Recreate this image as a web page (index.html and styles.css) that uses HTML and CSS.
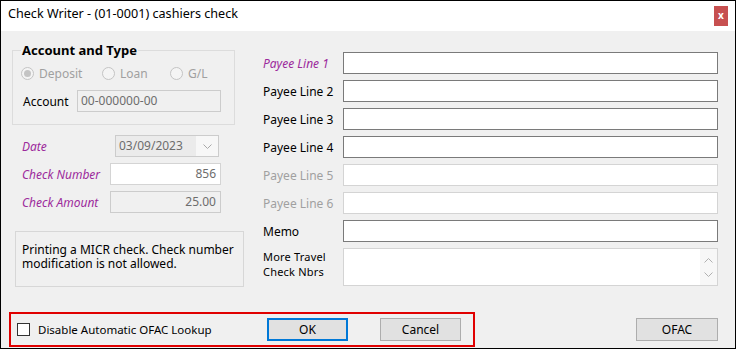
FILE: index.html
```html
<!DOCTYPE html>
<html lang="en">
<head>
    <meta charset="UTF-8">
    <meta name="viewport" content="width=device-width, initial-scale=1.0">
    <title>Check Writer</title>
    <link rel="stylesheet" href="styles.css">
</head>
<body>
    <div class="window">
        <div class="titlebar">
            <span class="title">Check Writer - (01-0001) cashiers check</span>
            <span class="close">x</span>
        </div>

        <div class="content">
            <div class="main">
                <div class="left">
                    <fieldset class="group">
                        <legend>Account and Type</legend>
                        <div class="radios">
                            <span class="radio radio-deposit"><span class="dot checked"></span>Deposit</span>
                            <span class="radio radio-loan"><span class="dot"></span>Loan</span>
                            <span class="radio"><span class="dot"></span>G/L</span>
                        </div>
                        <div class="account-row">
                            <span class="account-label">Account</span>
                            <div class="box box-disabled account-box">00-000000-00</div>
                        </div>
                    </fieldset>

                    <div class="fields">
                        <span class="label required">Date</span>
                        <div class="combo">
                            <span class="combo-text">03/09/2023</span>
                            <span class="combo-btn">
                                <svg width="9" height="5" viewBox="0 0 9 5"><path d="M0.5 0.5 L4.5 4.5 L8.5 0.5" fill="none" stroke="#a8a8a8" stroke-width="1"/></svg>
                            </span>
                        </div>

                        <span class="label required">Check Number</span>
                        <div class="box box-light num">856</div>

                        <span class="label required">Check Amount</span>
                        <div class="box box-disabled num">25.00</div>
                    </div>

                    <div class="notice">
                        Printing a MICR check. Check number modification is not allowed.
                    </div>
                </div>

                <div class="right">
                    <span class="label required">Payee Line 1</span>
                    <div class="box"></div>

                    <span class="label">Payee Line 2</span>
                    <div class="box"></div>

                    <span class="label">Payee Line 3</span>
                    <div class="box"></div>

                    <span class="label">Payee Line 4</span>
                    <div class="box"></div>

                    <span class="label muted">Payee Line 5</span>
                    <div class="box box-light"></div>

                    <span class="label muted">Payee Line 6</span>
                    <div class="box box-light"></div>

                    <span class="label">Memo</span>
                    <div class="box"></div>

                    <span class="label label-top">More Travel<br>Check Nbrs</span>
                    <div class="box box-light textarea">
                        <div class="scroll">
                            <svg width="9" height="5" viewBox="0 0 9 5"><path d="M0.5 4.5 L4.5 0.5 L8.5 4.5" fill="none" stroke="#b0b0b0" stroke-width="1"/></svg>
                            <svg width="9" height="5" viewBox="0 0 9 5"><path d="M0.5 0.5 L4.5 4.5 L8.5 0.5" fill="none" stroke="#b0b0b0" stroke-width="1"/></svg>
                        </div>
                    </div>
                </div>
            </div>

            <div class="footer">
                <div class="highlight">
                    <label class="check"><span class="checkbox"></span>Disable Automatic OFAC Lookup</label>
                    <button class="btn btn-default">OK</button>
                    <button class="btn">Cancel</button>
                </div>
                <button class="btn btn-ofac">OFAC</button>
            </div>
        </div>
    </div>
</body>
</html>
```

FILE: styles.css
```css
* {
    box-sizing: border-box;
    margin: 0;
    padding: 0;
}

body {
    font-family: "Noto Sans", "Open Sans", sans-serif;
    font-size: 12px;
    color: #000;
    background: #fff;
}

.window {
    width: 736px;
    height: 349px;
    border: 1px solid #000;
    display: flex;
    flex-direction: column;
}

.titlebar {
    height: 30px;
    background: #fff;
    display: flex;
    align-items: flex-start;
    justify-content: space-between;
    padding-left: 7px;
}

.title {
    margin-top: 5px;
    font-size: 12.6px;
    line-height: 16px;
}

.close {
    width: 14px;
    height: 20px;
    margin-top: 5px;
    margin-right: 7px;
    background: #c75050;
    color: #fff;
    font-size: 10px;
    font-weight: bold;
    line-height: 19px;
    text-align: center;
}

.content {
    flex: 1;
    background: #f0f0f0;
    display: flex;
    flex-direction: column;
}

.main {
    display: flex;
    padding-left: 11px;
}

/* left column */

.left {
    width: 232px;
}

.group {
    width: 223px;
    margin-top: 12px;
    border: 1px solid #dcdcdc;
    padding: 0 8px 12px 8px;
}

.group legend {
    font-weight: bold;
    font-size: 13px;
    line-height: 14px;
    padding: 0 1px;
    color: #000;
}

.radios {
    display: flex;
    align-items: center;
    height: 20px;
    margin-top: 6px;
    color: #a0a0a0;
}

.radio {
    display: flex;
    align-items: center;
    gap: 5px;
}

.radio-deposit {
    width: 81px;
}

.radio-loan {
    width: 68px;
}

.dot {
    width: 13px;
    height: 13px;
    border: 1px solid #c4c4c4;
    border-radius: 50%;
    background: #f4f4f4;
    display: flex;
    align-items: center;
    justify-content: center;
}

.dot.checked::after {
    content: "";
    width: 7px;
    height: 7px;
    border-radius: 50%;
    background: #c4c4c4;
}

.account-row {
    display: flex;
    align-items: center;
    margin-top: 7px;
}

.account-label {
    width: 56px;
    padding-left: 2px;
}

.account-box {
    width: 144px;
    padding-left: 3px;
}

.fields {
    display: grid;
    grid-template-columns: 88px 111px;
    grid-auto-rows: 22px;
    row-gap: 6px;
    align-items: center;
    margin-top: 10px;
    padding-left: 10px;
}

.combo {
    height: 22px;
    width: 104px;
    margin-left: 5px;
    border: 1px solid #cccccc;
    background: #ebebeb;
    display: flex;
    color: #6d6d6d;
}

.combo-text {
    flex: 1;
    padding-left: 3px;
    line-height: 20px;
}

.combo-btn {
    width: 22px;
    background: #f7f7f7;
    display: flex;
    align-items: center;
    justify-content: center;
}

.notice {
    width: 229px;
    height: 56px;
    margin-top: 18px;
    margin-left: 3px;
    border: 1px solid #d7d7d7;
    padding: 11px 8px 0 6px;
    line-height: 14px;
}

/* shared inputs */

.label {
    white-space: nowrap;
}

.label.required {
    color: #9c2a9c;
    font-style: italic;
}

.label.muted {
    color: #a0a0a0;
}

.label-top {
    align-self: start;
    font-size: 11px;
    letter-spacing: 0.2px;
    line-height: 15px;
    padding-top: 1px;
}

.box {
    height: 22px;
    border: 1px solid #7a7a7a;
    background: #fff;
    line-height: 20px;
    color: #6d6d6d;
}

.box-light {
    border-color: #d4d4d4;
}

.box-disabled {
    border-color: #cccccc;
    background: #f0f0f0;
}

.num {
    text-align: right;
    padding-right: 4px;
}

/* right column */

.right {
    display: grid;
    grid-template-columns: 80px 375px;
    grid-template-rows: repeat(7, 22px) 38px;
    row-gap: 6px;
    align-items: center;
    margin-top: 21px;
    margin-left: 19px;
}

.textarea {
    height: 38px;
    align-self: start;
    display: flex;
    justify-content: flex-end;
}

.scroll {
    width: 17px;
    display: flex;
    flex-direction: column;
    justify-content: space-between;
    align-items: center;
    padding: 9px 0 8px;
    background: #f7f7f7;
}

.scroll svg {
    display: block;
}

/* footer */

.footer {
    margin-top: auto;
    margin-bottom: 1px;
    display: flex;
    align-items: center;
    padding-left: 8px;
}

.highlight {
    width: 466px;
    height: 35px;
    border: 2px solid #e00000;
    display: flex;
    align-items: center;
}

.check {
    width: 250px;
    display: flex;
    align-items: center;
    gap: 8px;
    margin-left: 6px;
    font-size: 11.5px;
}

.checkbox {
    width: 13px;
    height: 13px;
    border: 1px solid #333;
    background: #fff;
}

button {
    font-family: inherit;
    font-size: 12px;
    color: #000;
}

.btn {
    width: 81px;
    height: 23px;
    background: #e1e1e1;
    border: 1px solid #adadad;
}

.btn-default {
    border: 2px solid #0078d7;
    margin-right: 32px;
}

.btn-ofac {
    width: 82px;
    margin-left: auto;
    margin-right: 17px;
}
```
